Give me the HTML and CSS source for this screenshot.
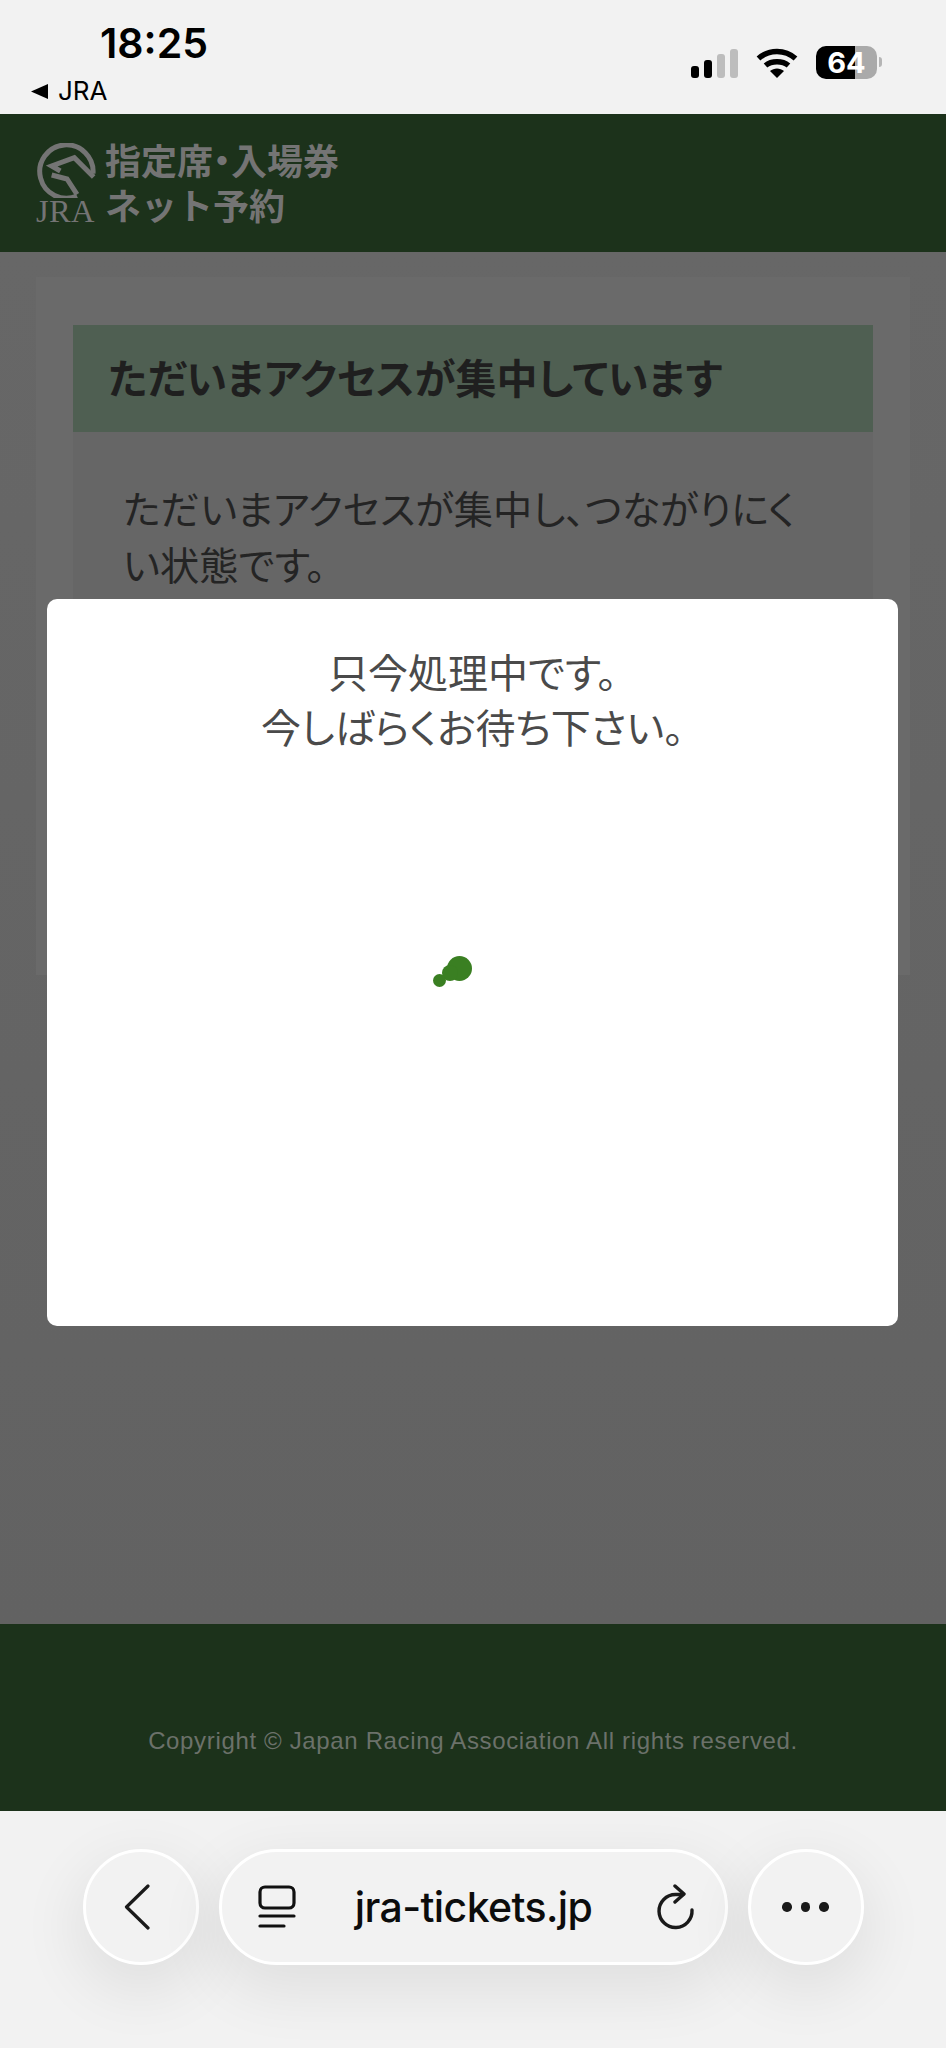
FILE: index.html
```html
<!DOCTYPE html>
<html lang="ja">
<head>
  <meta charset="UTF-8">
  <title>JRA 指定席・入場券ネット予約</title>
  <meta name="viewport" content="width=device-width, initial-scale=1.0">
  <link rel="stylesheet" href="styles.css">
</head>
<body>
  <div class="status-bar">
    <div class="status-left">
      <div class="clock">18:25</div>
      <div class="back-app">
        <svg class="back-tri" width="17" height="15" viewBox="0 0 17 15"><path d="M0 7.5 17 0v15z"/></svg>
        <span>JRA</span>
      </div>
    </div>
    <div class="status-right">
      <div class="signal">
        <i class="bar bar1"></i><i class="bar bar2"></i><i class="bar bar3"></i><i class="bar bar4"></i>
      </div>
      <svg class="wifi" width="42" height="31" viewBox="0 0 42 31" fill="none" stroke="#000" stroke-width="5.5">
        <path d="M2.5 11.5C13 2 29 2 39.5 11.5"/>
        <path d="M9.5 18.5C15.5 13.5 26.5 13.5 32.5 18.5"/>
        <path d="M14 24 21 31 28 24C24 20.5 18 20.5 14 24Z" fill="#000" stroke="none"/>
      </svg>
      <div class="battery"><span>64</span></div>
      <i class="battery-nub"></i>
    </div>
  </div>

  <header class="site-header">
    <div class="logo">
      <svg width="60" height="55" viewBox="45 40 180 165" fill="none" stroke="#747474" stroke-width="15" stroke-linejoin="miter">
        <path d="M168 199A80 80 0 1 1 216 132"/>
        <path d="M218 142 160 84 92 109 118 124"/>
        <path d="M92 136 138 148 168 194"/>
      </svg>
      <div class="logo-name">JRA</div>
    </div>
    <div class="site-title">指定席<span class="narrow">・</span>入場券<br>ネット予約</div>
  </header>

  <main class="page-main">
    <section class="card">
      <h2 class="card-title">ただいまアクセスが集中しています</h2>
      <div class="card-body">
        <p>ただいまアクセスが集中し、つながりにくい状態です。</p>
      </div>
    </section>
  </main>

  <footer class="site-footer">Copyright © Japan Racing Association All rights reserved.</footer>

  <nav class="browser-bar">
    <button class="round-btn back-btn">
      <svg width="26" height="46" viewBox="0 0 26 46" fill="none" stroke="#1a1a1a" stroke-width="3.2" stroke-linecap="round" stroke-linejoin="round"><path d="M24 2 2.5 23 24 44"/></svg>
    </button>
    <div class="url-pill">
      <svg width="38" height="44" viewBox="0 0 38 44" fill="none" stroke="#111" stroke-width="3.2" stroke-linecap="round">
        <rect x="2" y="2" width="34" height="21" rx="5"/>
        <path d="M2 31H36"/>
        <path d="M2 41H26"/>
      </svg>
      <span class="url-text">jra-tickets.jp</span>
      <svg width="38" height="46" viewBox="0 0 38 46" fill="none" stroke="#1a1a1a" stroke-width="3.4" stroke-linecap="round" stroke-linejoin="round">
        <path d="M35 26A16.5 16.5 0 1 1 18.5 10.5H26"/>
        <path d="M18 2 27 10 18 18"/>
      </svg>
    </div>
    <button class="round-btn">
      <span class="dots"><i></i><i></i><i></i></span>
    </button>
  </nav>

  <div class="modal">
    <p class="modal-text">只今処理中です。<br>今しばらくお待ち下さい。</p>
    <div class="spinner">
      <i class="dot dot-big"></i><i class="dot dot-mid"></i><i class="dot dot-small"></i>
    </div>
  </div>
</body>
</html>
```

FILE: styles.css
```css
html, body {
  margin: 0;
  padding: 0;
}

body {
  position: relative;
  display: flex;
  flex-direction: column;
  height: 2048px;
  overflow: hidden;
  background: #f2f2f2;
  font-family: "Noto Sans CJK JP", "Liberation Sans", sans-serif;
}

/* status bar */
.status-bar {
  display: flex;
  justify-content: space-between;
  height: 114px;
  background: #f2f2f2;
  color: #000;
}

.status-left {
  padding: 17px 0 0 31px;
}

.clock {
  padding-left: 69px;
  font-family: Inter, sans-serif;
  font-size: 41px;
  font-weight: 600;
  line-height: 52px;
}

.back-app {
  display: flex;
  align-items: center;
  gap: 10px;
  margin-top: 4px;
  font-family: Inter, sans-serif;
  font-size: 26px;
  line-height: 36px;
}

.status-right {
  display: flex;
  align-items: center;
  height: 66px;
  padding: 29px 64px 0 0;
}

.signal {
  display: flex;
  align-items: flex-end;
  gap: 5px;
  height: 30px;
  margin-right: 18px;
  padding-top: 2px;
}

.bar {
  width: 8px;
  border-radius: 3px;
  background: #000;
}

.bar1 { height: 12px; }
.bar2 { height: 18px; }
.bar3 { height: 24px; background: #bdbdbd; }
.bar4 { height: 29px; background: #bdbdbd; }

.wifi {
  margin-right: 18px;
}

.battery {
  width: 61px;
  height: 33px;
  border-radius: 10px;
  background: linear-gradient(90deg, #000 64%, #aaa 64%);
  color: #fff;
  font-family: Inter, sans-serif;
  font-size: 29px;
  font-weight: 700;
  line-height: 33px;
  text-align: center;
}

.battery-nub {
  width: 3px;
  height: 10px;
  margin-left: 2px;
  border-radius: 0 3px 3px 0;
  background: #b5b5b5;
}

/* site header */
.site-header {
  display: flex;
  align-items: center;
  gap: 10px;
  height: 138px;
  padding-left: 36px;
  background: #1c321b;
}

.logo {
  width: 59px;
  color: #747474;
}

.logo svg {
  display: block;
}

.logo-name {
  font-family: "Liberation Serif", serif;
  font-size: 32.5px;
  line-height: 26px;
  letter-spacing: 0.3px;
}

.site-title {
  margin-top: -3px;
  color: #747474;
  font-size: 36px;
  font-weight: 700;
  line-height: 45px;
}

.narrow {
  font-feature-settings: "palt";
}

/* dimmed page */
.page-main {
  flex: 1;
  padding: 25px 36px 0;
  background: linear-gradient(#676767, #626262);
}

.card {
  height: 650px;
  padding: 48px 37px 0;
  background: #6a6a6a;
}

.card-title {
  height: 107px;
  margin: 0;
  padding-left: 35px;
  background: #4f5f52;
  color: #1f1f1f;
  font-size: 41px;
  font-weight: 700;
  font-feature-settings: "palt";
  line-height: 102px;
}

.card-body {
  height: 543px;
  padding: 47px 60px 0 50px;
  background: #666;
}

.card-body p {
  margin: 0;
  color: #242424;
  font-size: 39.2px;
  font-feature-settings: "palt";
  line-height: 56px;
}

/* site footer */
.site-footer {
  height: 187px;
  box-sizing: border-box;
  padding-top: 102px;
  background: #1c321b;
  color: #6b716a;
  font-family: "Liberation Sans", sans-serif;
  font-size: 24px;
  line-height: 30px;
  letter-spacing: 0.65px;
  text-align: center;
}

/* browser toolbar */
.browser-bar {
  display: flex;
  justify-content: center;
  gap: 20px;
  height: 237px;
  box-sizing: border-box;
  padding-top: 38px;
}

.round-btn,
.url-pill {
  display: flex;
  align-items: center;
  height: 116px;
  box-sizing: border-box;
  border: 3px solid #fff;
  border-radius: 58px;
  background: #f2f2f2;
  box-shadow: 0 20px 60px 8px rgba(0, 0, 0, 0.075);
}

.round-btn {
  justify-content: center;
  width: 116px;
  padding: 0;
}

.back-btn {
  padding-right: 7px;
}

.url-pill {
  justify-content: space-between;
  width: 509px;
  padding: 0 29px 0 36px;
}

.url-text {
  margin-left: -6px;
  color: #0c0c0c;
  font-family: Inter, sans-serif;
  font-size: 41px;
  font-weight: 500;
  letter-spacing: -0.6px;
}

.dots {
  display: flex;
  gap: 9px;
}

.dots i {
  width: 9.5px;
  height: 9.5px;
  border-radius: 50%;
  background: #1a1a1a;
}

/* processing dialog, over the page */
.modal {
  position: absolute;
  left: 47px;
  top: 599px;
  width: 851px;
  height: 727px;
  border-radius: 10px;
  background: #fff;
}

.modal-text {
  margin: 45px 0 0;
  color: #4a4a4a;
  font-size: 40px;
  font-feature-settings: "palt";
  line-height: 55px;
  text-align: center;
}

.dot {
  position: absolute;
  border-radius: 50%;
  background: #3a7f22;
}

.dot-big { left: 400px; top: 357px; width: 25px; height: 25px; }
.dot-mid { left: 395px; top: 366px; width: 16px; height: 16px; }
.dot-small { left: 386px; top: 375px; width: 13px; height: 13px; }
```
